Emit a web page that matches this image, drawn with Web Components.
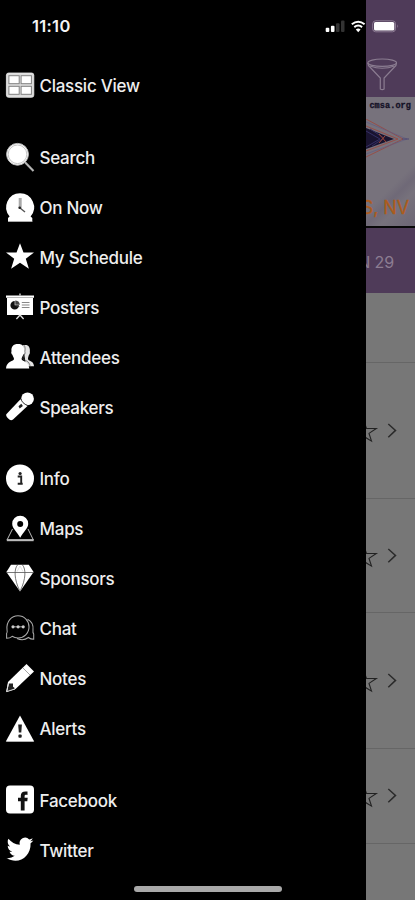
<!DOCTYPE html>
<html lang="en">
<head>
<meta charset="utf-8">
<title>Event menu</title>
<style>
html, body { margin: 0; height: 100%; background: #000; }
body { font-family: Inter, "Liberation Sans", sans-serif; overflow: hidden; }
</style>
</head>
<body>
<app-shell>
  <status-bar slot="status" time="11:10"></status-bar>
  <menu-drawer slot="drawer">
    <menu-group><menu-item icon="grid">Classic View</menu-item></menu-group>
    <menu-group>
      <menu-item icon="search">Search</menu-item>
      <menu-item icon="clock">On Now</menu-item>
      <menu-item icon="star">My Schedule</menu-item>
      <menu-item icon="poster">Posters</menu-item>
      <menu-item icon="people">Attendees</menu-item>
      <menu-item icon="mic">Speakers</menu-item>
    </menu-group>
    <menu-group>
      <menu-item icon="info">Info</menu-item>
      <menu-item icon="map">Maps</menu-item>
      <menu-item icon="gem">Sponsors</menu-item>
      <menu-item icon="chat">Chat</menu-item>
      <menu-item icon="pencil">Notes</menu-item>
      <menu-item icon="alert">Alerts</menu-item>
    </menu-group>
    <menu-group>
      <menu-item icon="facebook">Facebook</menu-item>
      <menu-item icon="twitter">Twitter</menu-item>
    </menu-group>
  </menu-drawer>
  <schedule-peek slot="page">
    <event-banner slot="banner"></event-banner>
    <date-bar slot="date">N 29</date-bar>
    <session-row empty style="height:70px"></session-row>
    <session-row style="height:136px"></session-row>
    <session-row style="height:114px"></session-row>
    <session-row style="height:136px"></session-row>
    <session-row style="height:95px"></session-row>
  </schedule-peek>
</app-shell>

<script>
const define = (name, html, setup) => {
  const tpl = document.createElement('template');
  tpl.innerHTML = html;
  customElements.define(name, class extends HTMLElement {
    constructor() {
      super();
      this.attachShadow({ mode: 'open' }).append(tpl.content.cloneNode(true));
    }
    connectedCallback() { if (setup) setup(this, this.shadowRoot); }
  });
};

const icons = {
  grid: `<rect x=".4" y="2" width="27.4" height="24.3" rx="2.2" fill="#ddd" stroke="#eee" stroke-width=".8"/>
    <g fill="#fff" stroke="#808080" stroke-width="1"><rect x="2.9" y="4.7" width="10.3" height="8"/><rect x="15.1" y="4.7" width="10.3" height="8"/><rect x="2.9" y="15.3" width="10.3" height="8"/><rect x="15.1" y="15.3" width="10.3" height="8"/></g>`,
  search: `<circle cx="11.5" cy="11.3" r="10.9" fill="#fff" stroke="#bbb" stroke-width="1"/><circle cx="11.5" cy="11.3" r="9.3" fill="#fff" stroke="#aaa" stroke-width=".7"/><path d="M18.5 18.7 27.5 28" stroke="#b4b4b4" stroke-width="2.1"/>`,
  clock: `<path d="M14 .2a14 14 0 0 1 10.6 23.2L26.3 25v3.5H2V25l1.6-1.6A14 14 0 0 1 14 .2Z" fill="#fff"/><path d="M2 28.5h24.3" stroke="#aaa"/><path d="M14.2 5v10.4" stroke="#aaa" stroke-width="3"/><path d="m14 15 5 4" stroke="#555" stroke-width="1.5"/><circle cx="13.7" cy="14.8" r="1.3" fill="#222"/>`,
  star: `<path d="m14 1.200 3.500 9.200H28l-8.200 6.400 3.100 9.900-8.900-5.900-8.900 5.900 3.100-9.900L0 10.400h10.500Z" fill="#fff"/>`,
  poster: `<path d="M0 3.500h28v2.200h-1V23H1V5.700H0Z" fill="#fff"/><path d="M1 5.500h26" stroke="#999" stroke-width=".7"/><path d="M14 1.500v2M14 23l-3.600 4M14 23l3.600 4" stroke="#ddd" stroke-width="1.300"/><path d="M8.700 9a4.300 4.300 0 1 0 4.300 4.300H8.700Z" fill="#111"/><path d="M9.500 8.800a4 4 0 0 1 4 3.700h-4ZM10.500 14.500h3" fill="#444" stroke="#444" stroke-width=".5"/><path d="M15.800 10.500h7.700M15.800 13h7.700M15.800 15.500h7.700" stroke="#888" stroke-width="1.100"/>`,
  people: `<path d="M17 3.300c5-1.400 7.500 1.400 6.800 6.800.4 1.600-.4 2.300-1 3.200-.8 2.300-1.300 4.200 0 5 2.800 1.200 5 2.400 5.200 6h-8Z" fill="#e4e4e4"/><path d="M12 2c4.800 0 6.700 2.700 6.100 7.200.7 1.500-.1 2.800-.9 3.600-.6 2-1.600 2.600-1.600 4.200 0 2.200 7 2.200 7.700 9.400H0c.4-7.200 8-7.200 8-9.400 0-1.600-1.200-2.200-1.600-4.200-.8-.8-1.600-2.100-.9-3.600C5 4.700 7.200 2 12 2Z" fill="#fff"/><path d="M18.400 3.300c.8 2 .9 4 .5 6 .7 2-.3 3.300-1.100 4.200-.4 1.600-1.200 2.500-.7 3.600 1.900 1.500 6 1.700 7 7" fill="none" stroke="#555" stroke-width=".7"/>`,
  mic: `<circle cx="21.500" cy="6.800" r="6.400" fill="#fff"/><path d="M14.500 7.200 21.500 14 7 27.400Q4.800 29.300 2.200 26.600T.3 22.300Z" fill="#fff"/><path d="M15 6.600q.7 4.700 6.900 7" fill="none" stroke="#333" stroke-width="1"/><path d="m12.500 14.200 2.800-2.500 1.600 2.200-3.200 2.700Z" fill="#222"/>`,
  info: `<circle cx="14" cy="14.500" r="14" fill="#fff"/><circle cx="14.100" cy="9.500" r="1.600" fill="#222"/><path d="M11.700 12.500h3.500v7M11.700 19.800h5" fill="none" stroke="#222" stroke-width="1.900"/>`,
  map: `<g transform="translate(0 1)"><path d="M6.500 14 1 25h26.400L22 14" fill="none" stroke="#bbb" stroke-width="1"/><path d="M.8 25.200h26.800" stroke="#bbb" stroke-width="2"/><path fill-rule="evenodd" d="M14.200.700a8 8 0 0 1 8 8c0 4.800-4.500 7.500-8 14-3.500-6.500-8-9.200-8-14a8 8 0 0 1 8-8Zm0 5.200a3 3 0 1 0 0 6 3 3 0 0 0 0-6Z" fill="#fff"/></g>`,
  gem: `<path d="M5 .8h17.800l4.800 7.300L14 27.500.4 8.100Z" fill="#fff"/><path d="M1 8.500h26M11.500 1C8 5 8 15 13.600 26.500M16.500 1C20 5 20 15 14.400 26.500" fill="none" stroke="#555" stroke-width=".8"/><path d="M11 7.600 14 2l3 5.600" fill="none" stroke="#ccc" stroke-width=".6"/>`,
  chat: `<g fill="none" stroke="#aaa" stroke-width="1.050"><path d="M.6 24.300V19.500C1.500 18.500 1.300 17 1 15.500.2 7.500 5.500 1.800 12 1.800S23 6.800 23 13 18 24 12 24c-2.300 0-4.200-.6-5.800-1.700-1.700 1.500-3.500 2-5.600 2Z"/><path d="M21.500 5.300C26 7.500 27.500 11.500 27 16c-.2 1.500-.2 3 .7 4v5.300c-2 0-3.700-.5-5.300-1.800-3.200 2.400-7.800 2.600-11.400 1"/></g><path d="M7 12.800h10.500" stroke="#aaa" stroke-width=".9"/><g fill="#ccc"><circle cx="7" cy="12.800" r="1.600"/><circle cx="12.100" cy="12.800" r="1.600"/><circle cx="17.200" cy="12.800" r="1.600"/></g>`,
  pencil: `<path d="M20.500 0 28 7.500 9.500 25 .3 28 2 18Z" fill="#fff"/><path d="m17 4 7 7" stroke="#999" stroke-width=".9"/><path d="M3 19.500h4v3.200l2 1.500-5 3H1.200Z" fill="#222"/><path d="M2.300 19.500.6 27.600 9 25" fill="none" stroke="#ddd" stroke-width="1"/>`,
  alert: `<path d="M14 1.500 28.200 27.500H-.2Z" fill="#fff"/><path d="M.5 27.500h27" stroke="#bbb" stroke-width=".8"/><path d="M12.200 10.500h3.700l-.6 8h-2.500Z" fill="#222"/><rect x="12.400" y="20.500" width="3.300" height="3.200" rx="1" fill="#222"/>`,
  facebook: `<g transform="translate(0 .5)"><rect width="28" height="28" rx="4" fill="#fff"/><path d="M14.800 25V15.800h-2.800v-3.500h2.800V10.300c0-3.500 2.300-4.900 6.700-4.200v3.300c-2.100-.2-2.900.1-2.900 1.400v1.500h3.100l-.4 3.500h-2.700V25Z" fill="#111"/></g>`,
  twitter: `<g transform="translate(.2 1.800) scale(1.150 1.200)"><path fill="#fff" d="M23.600 3c-.9.400-1.800.6-2.700.8 1-.6 1.700-1.500 2.100-2.600-.9.500-1.900.9-3 1.100A4.800 4.800 0 0 0 11.800 6.700C7.800 6.500 4.300 4.600 1.900 1.700c-1.200 2.200-.6 5 1.500 6.400-.8 0-1.500-.2-2.100-.6 0 2.300 1.600 4.300 3.800 4.800-.7.200-1.500.2-2.200.1.600 1.900 2.400 3.300 4.500 3.300A9.700 9.700 0 0 1 .3 17.700c10 6.200 21.400-.9 20.900-12.300.9-.6 1.800-1.400 2.400-2.400Z"/></g>`
};

define('app-shell', `<style>
  :host { display: grid; grid-template-columns: 366px 49px; width: 415px; height: 900px; position: relative; overflow: hidden; }
  .over { position: absolute; inset: 0 0 auto 0; z-index: 2; }
  .home { position: absolute; left: 134px; bottom: 8.500px; width: 148px; height: 5.500px; border-radius: 3px; background: #a9a9a9; z-index: 2; }
</style><slot name="drawer"></slot><slot name="page"></slot><div class="over"><slot name="status"></slot></div><div class="home"></div>`);

define('status-bar', `<style>
  :host { display: flex; height: 52px; box-sizing: border-box; padding: 0 14px 0 32px; align-items: center; justify-content: space-between; color: #f4f4f4; }
  .time { font-size: 16.500px; font-weight: 600; letter-spacing: .3px; line-height: 20px; }
  svg { display: block; }
</style><span class="time"></span>
<svg width="76" height="16" viewBox="0 0 76 16">
  <rect x=".7" y="9.800" width="3.600" height="4.200" rx="1" fill="#fff"/><rect x="5.900" y="7.800" width="3.600" height="6.200" rx="1" fill="#fff"/><rect x="11" y="5.300" width="3.500" height="8.700" rx="1" fill="#333"/><rect x="16" y="2.500" width="3.500" height="11.500" rx="1" fill="#333"/>
  <g fill="none" stroke="#fff" stroke-width="2"><path d="M26.800 6.300q6.400-5.200 12.800 0"/><path d="M29.300 9.100q3.900-3.100 7.800 0"/></g><path d="m30.800 11.500q2.400-1.900 4.800 0l-2.400 2.700Z" fill="#fff"/>
  <rect x="47.700" y="2.800" width="22.800" height="11" rx="3" fill="none" stroke="#8d7c94" stroke-width="1"/><rect x="49" y="4" width="20.300" height="8.600" rx="1.600" fill="#fff"/><path d="M72.300 6.300q1.600 1.900 0 3.800Z" fill="#8d7c94"/>
</svg>`, (el, root) => { root.querySelector('.time').textContent = el.getAttribute('time'); });

define('menu-drawer', `<style>
  :host { display: flex; flex-direction: column; gap: 21.700px; padding-top: 60.500px; background: #000; box-sizing: border-box; }
</style><slot></slot>`);

define('menu-group', `<style>:host { display: flex; flex-direction: column; }</style><slot></slot>`);

define('menu-item', `<style>
  :host { display: flex; height: 49.950px; align-items: center; gap: 5.500px; padding-left: 6px; color: #eee; font-size: 17px; font-weight: 500; letter-spacing: -.27px; line-height: 22px; white-space: nowrap; }
  svg { display: block; width: 28px; height: 29px; overflow: visible; flex: none; }
  span { padding-top: 2px; }
</style><svg viewBox="0 0 28 29"></svg><span><slot></slot></span>`,
(el, root) => { root.querySelector('svg').innerHTML = icons[el.getAttribute('icon')]; });

define('schedule-peek', `<style>
  :host { display: flex; flex-direction: column; background: #777; overflow: hidden; min-width: 0; }
  header { height: 97px; box-sizing: border-box; padding: 58px 0 0 1px; background: #4f3b59; }
  svg { display: block; }
</style>
<header><svg width="31" height="33" viewBox="0 0 31 33" fill="none" stroke="#8b7d91" stroke-width="1.200"><ellipse cx="15.200" cy="4.700" rx="14.300" ry="3.700"/><path d="M.9 5q0 2.500 2 4L13.300 20V31q1.900 1.300 3.800 0V20L27.500 9q2-1.500 2-4"/><path d="M3 8q12.200 4.500 24.400 0"/></svg></header>
<slot name="banner"></slot><slot name="date"></slot><slot></slot>`);

define('event-banner', `<style>
  :host { display: flex; flex-direction: column; height: 131px; box-sizing: border-box; padding: 4px 4px 6px 0; border-bottom: 2px solid #080808; background: linear-gradient(135deg,#77727c 0 65%,#6f6977 72%,#77727c 80%,#6d6675); overflow: hidden; }
  .url { align-self: flex-end; font: 700 8.500px/11px "Liberation Mono", monospace; letter-spacing: .1px; color: #141126; -webkit-text-stroke: .3px #141126; white-space: nowrap; }
  .place { align-self: flex-end; margin-top: auto; font-size: 18px; line-height: 24px; color: #ad5c1c; -webkit-text-stroke: .3px #ad5c1c; white-space: nowrap; padding-right: 2px; letter-spacing: -.1px; }
  svg { display: block; flex: none; margin-top: 7px; }
</style><span class="url">cmsa.org</span>
<svg width="49" height="42" viewBox="0 0 49 42" fill="none"><path d="M0 0 37 20 0 38M0 7l32 13-32 12" stroke="#984b43" stroke-width=".9"/><path d="M0 3 41 20 0 35" stroke="#625c83" stroke-width=".7"/><path d="M0 9 28 20 0 30Z" fill="#19132f"/><path d="m0 12 14 8-14 8M4 10l14 9-12 8" stroke="#353064" stroke-width="1"/><path d="m13 15 7 8m-7 1 6-7" stroke="#9a4231" stroke-width="1"/><path d="M36 20h7" stroke="#4d4772"/></svg>
<span class="place">S, NV</span>`);

define('date-bar', `<style>
  :host { display: flex; height: 65px; flex: none; align-items: center; justify-content: flex-end; padding: 2px 21px 0 0; box-sizing: border-box; background: #4f3b59; color: #8c7d92; font-size: 16px; letter-spacing: -.1px; white-space: nowrap; }
</style><span><slot></slot></span>`);

define('session-row', `<style>
  :host { display: flex; flex: none; box-sizing: border-box; border-bottom: 1px solid #666; align-items: center; justify-content: flex-end; padding-right: 16px; }
  :host([empty]) svg { display: none; }
  svg { display: block; flex: none; }
</style><svg width="46" height="26" viewBox="0 0 46 26" fill="none">
<path d="m10.800 3.300 2.700 7.200h9.800L16 15.400l2.500 7.700-7.700-4.700-7.700 4.700 2.500-7.700-7.300-4.900h9.800Z" stroke="#222" stroke-width="1.100"/><path d="m35.300 6 7.200 6.400-7.200 6.800" stroke="#2b2b2b" stroke-width="1.500"/></svg>`);
</script>
</body>
</html>
